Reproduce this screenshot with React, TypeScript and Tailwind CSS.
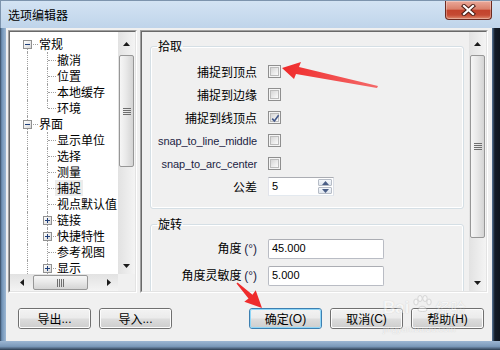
import React from "react";

const LAT = "font-['Liberation_Sans','Noto_Sans_CJK_SC',sans-serif]";

function Up({ c = "#1a1a1a" }: { c?: string }) {
  return (
    <svg width="7" height="4" viewBox="0 0 7 4">
      <path d="M0 4 L3.5 0 L7 4Z" fill={c} />
    </svg>
  );
}
function Down({ c = "#1a1a1a" }: { c?: string }) {
  return (
    <svg width="7" height="4" viewBox="0 0 7 4">
      <path d="M0 0 L7 0 L3.5 4Z" fill={c} />
    </svg>
  );
}
function Left() {
  return (
    <svg width="4" height="7" viewBox="0 0 4 7">
      <path d="M4 0 L4 7 L0 3.5Z" fill="#1a1a1a" />
    </svg>
  );
}
function Right() {
  return (
    <svg width="4" height="7" viewBox="0 0 4 7">
      <path d="M0 0 L0 7 L4 3.5Z" fill="#1a1a1a" />
    </svg>
  );
}

function GripH() {
  return (
    <svg width="8" height="7" viewBox="0 0 8 7">
      <path d="M0 0.5H8M0 2.5H8M0 4.5H8M0 6.5H8" stroke="#6e6e6e" strokeWidth="1" />
    </svg>
  );
}
function GripV() {
  return (
    <svg width="7" height="8" viewBox="0 0 7 8">
      <path d="M0.5 0V8M2.5 0V8M4.5 0V8M6.5 0V8" stroke="#6e6e6e" strokeWidth="1" />
    </svg>
  );
}

function VScroll({ thumb }: { thumb: string }) {
  return (
    <div className="w-[17px] h-full flex flex-col bg-[linear-gradient(to_right,#e2e2e2,#f4f4f4)]">
      <div className="h-[22px] shrink-0 flex items-center justify-center pt-[2px]">
        <Up />
      </div>
      <div className="flex-1 flex flex-col px-[1px] pt-[1px]">
        <div
          className={`${thumb} rounded-[2px] border border-[#979797] bg-[linear-gradient(to_right,#f6f6f6,#e9e9e9_45%,#d4d4d4)] flex items-center justify-center`}
        >
          <GripH />
        </div>
      </div>
      <div className="h-[17px] shrink-0 flex items-center justify-center">
        <Down />
      </div>
    </div>
  );
}

function HScroll() {
  return (
    <div className="h-[17px] w-full flex bg-[linear-gradient(to_bottom,#e2e2e2,#f4f4f4)]">
      <div className="w-[22px] shrink-0 flex items-center justify-center pl-[2px]">
        <Left />
      </div>
      <div className="flex-1 flex py-[1px] pl-[1px]">
        <div className="w-[55px] rounded-[2px] border border-[#979797] bg-[linear-gradient(to_bottom,#f6f6f6,#e9e9e9_45%,#d4d4d4)] flex items-center justify-center">
          <GripV />
        </div>
      </div>
      <div className="w-[18px] shrink-0 flex items-center justify-center">
        <Right />
      </div>
    </div>
  );
}

type Node = {
  t: string;
  lvl: 0 | 1;
  box?: "-" | "+";
  v0: "full" | "bottom";
  v1?: "full" | "top";
  sel?: boolean;
};

const nodes: Node[] = [
  { t: "常规", lvl: 0, box: "-", v0: "bottom" },
  { t: "撤消", lvl: 1, v0: "full", v1: "full" },
  { t: "位置", lvl: 1, v0: "full", v1: "full" },
  { t: "本地缓存", lvl: 1, v0: "full", v1: "full" },
  { t: "环境", lvl: 1, v0: "full", v1: "top" },
  { t: "界面", lvl: 0, box: "-", v0: "full" },
  { t: "显示单位", lvl: 1, v0: "full", v1: "full" },
  { t: "选择", lvl: 1, v0: "full", v1: "full" },
  { t: "测量", lvl: 1, v0: "full", v1: "full" },
  { t: "捕捉", lvl: 1, v0: "full", v1: "full", sel: true },
  { t: "视点默认值", lvl: 1, v0: "full", v1: "full" },
  { t: "链接", lvl: 1, box: "+", v0: "full", v1: "full" },
  { t: "快捷特性", lvl: 1, box: "+", v0: "full", v1: "full" },
  { t: "参考视图", lvl: 1, v0: "full", v1: "full" },
  { t: "显示", lvl: 1, box: "+", v0: "full", v1: "full" },
];

function TBox({ plus, left }: { plus: boolean; left: string }) {
  return (
    <div
      className={`absolute ${left} top-[4px] w-[9px] h-[9px] border border-[#919191] bg-[linear-gradient(135deg,#ffffff,#d8d8d8)] z-10`}
    >
      <div className="absolute left-[1px] top-[3px] w-[5px] h-[1px] bg-[#1f3f7a]" />
      {plus && <div className="absolute left-[3px] top-[1px] w-[1px] h-[5px] bg-[#1f3f7a]" />}
    </div>
  );
}

function TreeRow({ n }: { n: Node }) {
  return (
    <div className="h-[16px] flex items-center">
      <div className={`relative h-full shrink-0 ${n.lvl === 0 ? "w-[29px]" : "w-[47px]"}`}>
        {n.v0 === "bottom" ? (
          <div className="absolute left-[17px] top-[8px] bottom-0 border-l border-dotted border-[#a0a0a0]" />
        ) : (
          <div className="absolute left-[17px] top-0 bottom-0 border-l border-dotted border-[#a0a0a0]" />
        )}
        {n.lvl === 0 && (
          <div className="absolute left-[18px] w-[10px] top-[8px] border-t border-dotted border-[#a0a0a0]" />
        )}
        {n.lvl === 0 && <TBox plus={n.box === "+"} left="left-[13px]" />}
        {n.lvl === 1 &&
          (n.v1 === "top" ? (
            <div className="absolute left-[37px] top-0 h-[8px] border-l border-dotted border-[#a0a0a0]" />
          ) : (
            <div className="absolute left-[37px] top-0 bottom-0 border-l border-dotted border-[#a0a0a0]" />
          ))}
        {n.lvl === 1 && (
          <div className="absolute left-[38px] w-[8px] top-[8px] border-t border-dotted border-[#a0a0a0]" />
        )}
        {n.lvl === 1 && n.box && <TBox plus={n.box === "+"} left="left-[33px]" />}
      </div>
      <span
        className={`text-[12px] leading-[16px] whitespace-nowrap text-black ${
          n.sel ? "bg-[#ececec] px-[2px] -mx-[2px]" : ""
        }`}
      >
        {n.t}
      </span>
    </div>
  );
}

function Sunken({ className, children }: { className: string; children: React.ReactNode }) {
  return (
    <div
      className={`${className} border border-t-[#a0a0a0] border-l-[#a0a0a0] border-r-[#ffffff] border-b-[#ffffff]`}
    >
      <div className="w-full h-full border border-t-[#696969] border-l-[#696969] border-r-[#e3e3e3] border-b-[#e3e3e3]">
        {children}
      </div>
    </div>
  );
}

function Checkbox({ checked }: { checked?: boolean }) {
  return (
    <div className="w-[13px] h-[13px] border border-[#8f8f8f] bg-[#f4f4f4] p-[1px] shrink-0">
      <div className="relative w-full h-full border border-[#bcbcbc] bg-[linear-gradient(135deg,#d6d6d6,#fbfbfb)]">
        {checked && (
          <svg className="absolute left-0 top-0" width="9" height="9" viewBox="0 0 9 9">
            <path d="M1.2 4.6 L3.4 7 L7.6 1.2" stroke="#44598a" strokeWidth="1.6" fill="none" />
          </svg>
        )}
      </div>
    </div>
  );
}

function Label({ children }: { children: React.ReactNode }) {
  return (
    <div className="w-[106px] shrink-0 text-right text-[12px] leading-[16px] whitespace-nowrap text-black">
      {children}
    </div>
  );
}

function Lat({ children, big }: { children: React.ReactNode; big?: boolean }) {
  return (
    <span className={`${LAT} ${big ? "text-[12px]" : "text-[11px] tracking-[-0.1px]"} text-[#1c2444]`}>
      {children}
    </span>
  );
}

function CheckRow({ label, checked }: { label: React.ReactNode; checked?: boolean }) {
  return (
    <div className="h-[23px] flex items-center gap-[11px]">
      <Label>{label}</Label>
      <Checkbox checked={checked} />
    </div>
  );
}

function TextInput({ value }: { value: string }) {
  return (
    <div className="w-[116px] h-[20px] rounded-[2px] border border-[#b9bcc4] border-t-[#abadb3] bg-white flex items-center pl-[3px]">
      <span className={`${LAT} text-[11px] text-black`}>{value}</span>
    </div>
  );
}

function Btn({ children, def }: { children: React.ReactNode; def?: boolean }) {
  return (
    <div
      className={`w-[73px] h-[21px] rounded-[3px] border ${
        def ? "border-[#3c7fb1]" : "border-[#707070]"
      }`}
    >
      <div
        className={`w-full h-full rounded-[2px] border ${
          def ? "border-[#8fd6f7]" : "border-[#fcfcfc]"
        } bg-[linear-gradient(#f2f2f2_0%,#ebebeb_48%,#dddddd_52%,#cfcfcf_100%)] flex items-center justify-center text-[12px] leading-none text-black whitespace-nowrap`}
      >
        {children}
      </div>
    </div>
  );
}

export default function App() {
  return (
    <div className="relative w-[500px] h-[350px] overflow-hidden flex flex-col font-['Noto_Sans_CJK_SC',sans-serif] bg-[#8aa7c6]">
      {/* title bar */}
      <div className="h-[28px] shrink-0 flex items-start justify-between bg-[linear-gradient(to_bottom,#d3e3f3,#bfd4ea)] border-t border-l border-[#7d94ad]">
        <div className="pl-[7px] pt-[6px] text-[12px] leading-[16px] text-black">选项编辑器</div>
        <div className="mr-[8px] w-[47px] h-[19px] rounded-b-[4px] border border-t-0 border-[#6d2a20] bg-[linear-gradient(#eaa99a,#d9806b_45%,#c3432c_52%,#c54a33_78%,#de8a6d)] shadow-[inset_0_0_0_1px_rgba(255,255,255,0.3)] flex items-center justify-center">
          <svg width="15" height="12" viewBox="0 0 15 12">
            <path d="M3 2 L12 10 M12 2 L3 10" stroke="#4a1d15" strokeWidth="4.2" strokeLinecap="square" />
            <path d="M3 2 L12 10 M12 2 L3 10" stroke="#ffffff" strokeWidth="2.2" strokeLinecap="square" />
          </svg>
        </div>
      </div>

      {/* middle */}
      <div className="flex-1 flex">
        <div className="w-[6px] shrink-0 bg-[linear-gradient(to_right,#33475e,#6f91b5_30%,#9db8d4)]" />
        <div className="w-[486px] shrink-0 bg-[#f0f0f0] flex flex-col pl-[2px] pt-[2px]">
          <div className="flex gap-[3px] h-[263px] shrink-0">
            {/* tree */}
            <Sunken className="w-[129px] h-full">
              <div className="w-full h-full grid grid-cols-[1fr_17px] grid-rows-[1fr_17px] bg-white">
                <div className="overflow-hidden pt-[4px]">
                  {nodes.map((n) => (
                    <TreeRow key={n.t + n.lvl} n={n} />
                  ))}
                </div>
                <VScroll thumb="h-[112px]" />
                <HScroll />
                <div className="bg-[#f0f0f0]" />
              </div>
            </Sunken>

            {/* options */}
            <Sunken className="w-[348px] h-full">
              <div className="w-full h-full flex bg-[#f0f0f0]">
                <div className="flex-1 overflow-hidden pl-[8px] pr-[5px]">
                  <fieldset className="mt-[6px] border border-[#d5dfe5] rounded-[3px] shadow-[inset_0_0_0_1px_#ffffff] pb-[10px]">
                    <legend className="ml-[6px] px-[1px] text-[12px] leading-[16px] text-black">拾取</legend>
                    <div className="pt-[6px]">
                      <CheckRow label="捕捉到顶点" />
                      <CheckRow label="捕捉到边缘" />
                      <CheckRow label="捕捉到线顶点" checked />
                      <CheckRow label={<Lat>snap_to_line_middle</Lat>} />
                      <CheckRow label={<Lat>snap_to_arc_center</Lat>} />
                      <div className="h-[23px] flex items-center gap-[11px]">
                        <Label>公差</Label>
                        <div className="w-[66px] h-[19px] border border-[#abadb3] border-b-[#e3e9ef] border-l-[#e2e3ea] border-r-[#dbdfe6] bg-white flex">
                          <div className={`flex-1 pl-[3px] ${LAT} text-[11px] leading-[17px] text-black`}>5</div>
                          <div className="w-[15px] flex flex-col py-[1px] pr-[1px] gap-[1px]">
                            <div className="flex-1 rounded-[1px] border border-[#b6bcc6] bg-[linear-gradient(#f4f7fb,#dfe6ee)] flex items-center justify-center">
                              <Up c="#4a5e86" />
                            </div>
                            <div className="flex-1 rounded-[1px] border border-[#b6bcc6] bg-[linear-gradient(#f4f7fb,#dfe6ee)] flex items-center justify-center">
                              <Down c="#4a5e86" />
                            </div>
                          </div>
                        </div>
                      </div>
                    </div>
                  </fieldset>

                  <fieldset className="mt-[7px] border border-[#d5dfe5] rounded-[3px] shadow-[inset_0_0_0_1px_#ffffff] pb-[10px]">
                    <legend className="ml-[6px] px-[1px] text-[12px] leading-[16px] text-black">旋转</legend>
                    <div className="pt-[3px]">
                      <div className="h-[27px] flex items-center gap-[11px]">
                        <Label>
                          角度 <Lat big>(°)</Lat>
                        </Label>
                        <TextInput value="45.000" />
                      </div>
                      <div className="h-[27px] flex items-center gap-[11px]">
                        <Label>
                          角度灵敏度 <Lat big>(°)</Lat>
                        </Label>
                        <TextInput value="5.000" />
                      </div>
                      <div className="h-[27px]" />
                    </div>
                  </fieldset>
                </div>
                <VScroll thumb="h-[183px]" />
              </div>
            </Sunken>
          </div>

          {/* buttons */}
          <div className="mt-[15px] flex justify-between pl-[10px] pr-[8px]">
            <div className="flex gap-[8px]">
              <Btn>
                导出<span className={LAT}>...</span>
              </Btn>
              <Btn>
                导入<span className={LAT}>...</span>
              </Btn>
            </div>
            <div className="flex gap-[8px]">
              <Btn def>
                确定<span className={LAT}>(O)</span>
              </Btn>
              <Btn>
                取消<span className={LAT}>(C)</span>
              </Btn>
              <Btn>
                帮助<span className={LAT}>(H)</span>
              </Btn>
            </div>
          </div>
        </div>
        <div className="w-[8px] shrink-0 bg-[linear-gradient(to_right,#5b7a9c,#141c28_35%,#0f1620)]" />
      </div>
      <div className="h-[9px] shrink-0 bg-[linear-gradient(to_bottom,#9cb6d2,#7b99ba_60%,#2d3e52)]" />

      {/* watermark */}
      <div className="absolute left-[383px] top-[295px] pointer-events-none opacity-40 flex flex-col items-start">
        <div className="flex items-end gap-[2px]">
          <span className={`${LAT} text-[17px] leading-[18px] font-bold text-white [text-shadow:0_0_1px_#8a8a8a]`}>Bai</span>
          <svg width="22" height="18" viewBox="0 0 22 18" className="mb-[4px]">
            <g fill="white" stroke="#9a9a9a" strokeWidth="0.8">
              <ellipse cx="5" cy="7" rx="2.2" ry="3" />
              <ellipse cx="9" cy="3.5" rx="2.2" ry="3" />
              <ellipse cx="14" cy="3.5" rx="2.2" ry="3" />
              <ellipse cx="18" cy="7" rx="2.2" ry="3" />
              <path d="M7 15 C7 10 15 10 16 15 C16 17 7 17 7 15Z" />
            </g>
          </svg>
          <span className="text-[15px] leading-[18px] text-white [text-shadow:0_0_1px_#8a8a8a]">经验</span>
        </div>
        <span className={`${LAT} text-[9px] leading-[10px] text-white [text-shadow:0_0_1px_#8a8a8a] mt-[7px]`}>
          jingyan.baidu.com
        </span>
      </div>

      {/* red annotation arrows */}
      <svg className="absolute left-0 top-0 pointer-events-none" width="500" height="350" viewBox="0 0 500 350">
        <defs>
          <linearGradient id="ag1" x1="282" y1="68" x2="378" y2="87" gradientUnits="userSpaceOnUse">
            <stop offset="0" stopColor="#ef2a2a" />
            <stop offset="1" stopColor="#f46a6a" />
          </linearGradient>
        </defs>
        <polygon
          points="282,68 301,62 299,67 378,86 377,88 296,74 294,79"
          fill="url(#ag1)"
        />
        <polygon
          points="262,308 244.3,301.7 248.5,298.6 236.5,283.5 237.5,282.5 252.5,294.8 255.7,290.3"
          fill="#ef2c2c"
        />
      </svg>
    </div>
  );
}
